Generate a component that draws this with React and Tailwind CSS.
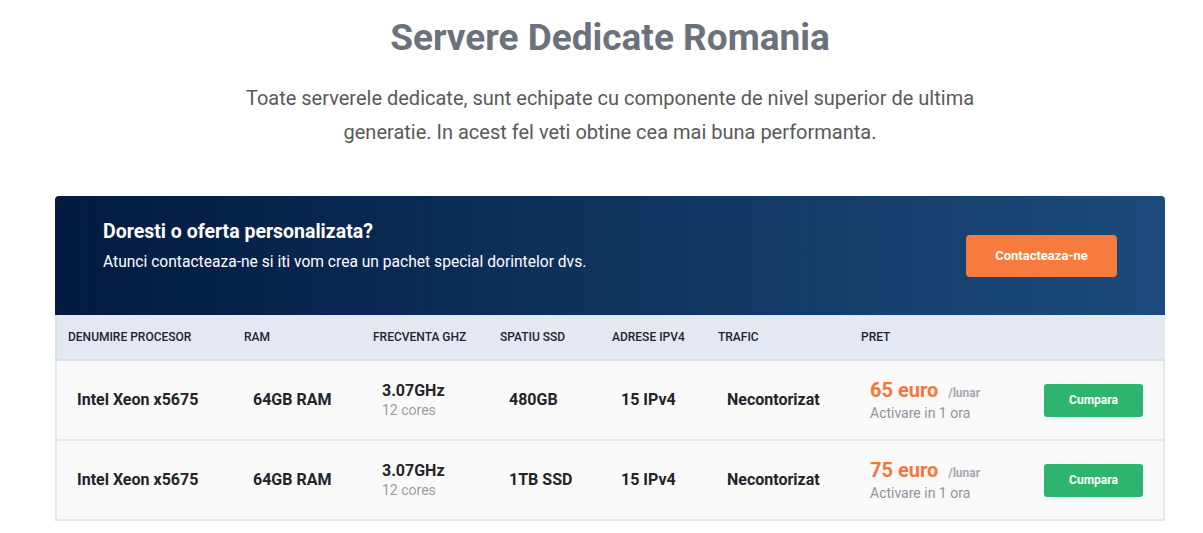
import React from "react";

const rows = [
  { cpu: "Intel Xeon x5675", ram: "64GB RAM", ghz: "3.07GHz", cores: "12 cores", ssd: "480GB", ip: "15 IPv4", trafic: "Necontorizat", price: "65 euro" },
  { cpu: "Intel Xeon x5675", ram: "64GB RAM", ghz: "3.07GHz", cores: "12 cores", ssd: "1TB SSD", ip: "15 IPv4", trafic: "Necontorizat", price: "75 euro" },
];

const cols = "grid grid-cols-[176px_129px_127px_112px_106px_143px_1fr_99px] items-center";

export default function App() {
  return (
    <div className="w-full min-h-[533px] bg-white overflow-hidden" style={{ fontFamily: "Roboto, 'Liberation Sans', sans-serif" }}>
      <div className="ml-[55px] w-[1110px]">
        <div className="flex flex-col items-center text-center">
          <h1 className="mt-[14px] text-[37px] leading-[48px] font-bold text-[#6b727b]">Servere Dedicate Romania</h1>
          <p className="mt-[19px] w-[760px] text-[20px] leading-[34px] text-[#595959]">
            Toate serverele dedicate, sunt echipate cu componente de nivel superior de ultima generatie. In acest fel veti obtine cea mai buna performanta.
          </p>
        </div>

        <div className="mt-[47px] rounded-t-[4px] overflow-hidden">
          <div className="h-[119px] flex items-start justify-between pl-[48px] pr-[48px] bg-gradient-to-r from-[#031a40] via-[#0f335f] to-[#1b4b7c]">
            <div className="pt-[23px]">
              <div className="text-[19.5px] leading-[26px] font-bold text-white">Doresti o oferta personalizata?</div>
              <div className="mt-[6px] text-[15.6px] leading-[22px] text-white">Atunci contacteaza-ne si iti vom crea un pachet special dorintelor dvs.</div>
            </div>
            <button className="self-center w-[151px] h-[42px] rounded-[4px] bg-[#f77b3c] text-white text-[13px] font-bold">Contacteaza-ne</button>
          </div>

          <div className={`${cols} h-[46px] pl-[11px] pr-[20px] bg-[#e4e8f0] border-l-2 border-b-2 border-[#d9dfea] text-[12px] font-medium text-[#1e2430] uppercase`}>
            <div>Denumire procesor</div>
            <div>RAM</div>
            <div>Frecventa GHZ</div>
            <div>Spatiu SSD</div>
            <div>Adrese IPV4</div>
            <div>Trafic</div>
            <div>Pret</div>
            <div></div>
          </div>

          {rows.map((r, i) => (
            <div key={i} className={`${cols} h-[80px] pl-[20px] pr-[20px] bg-[#f9f9fa] border-l-2 border-r-2 border-b-2 border-[#e3e8f1] text-[16px] font-bold text-[#222428]`}>
              <div>{r.cpu}</div>
              <div>{r.ram}</div>
              <div className="flex flex-col">
                <span className="leading-[20px]">{r.ghz}</span>
                <span className="text-[14px] leading-[18px] font-normal text-[#9a9da2]">{r.cores}</span>
              </div>
              <div>{r.ssd}</div>
              <div>{r.ip}</div>
              <div>{r.trafic}</div>
              <div className="flex flex-col">
                <span className="leading-[22px]">
                  <span className="text-[20px] text-[#f4773a]">{r.price}</span>
                  <span className="ml-[10px] text-[12px] text-[#a3a9b2]">/lunar</span>
                </span>
                <span className="text-[14px] leading-[18px] font-normal text-[#8d949e]">Activare in 1 ora</span>
              </div>
              <button className="w-[99px] h-[33px] rounded-[3px] bg-[#2db46d] text-white text-[12px] font-bold">Cumpara</button>
            </div>
          ))}
        </div>
      </div>
    </div>
  );
}
